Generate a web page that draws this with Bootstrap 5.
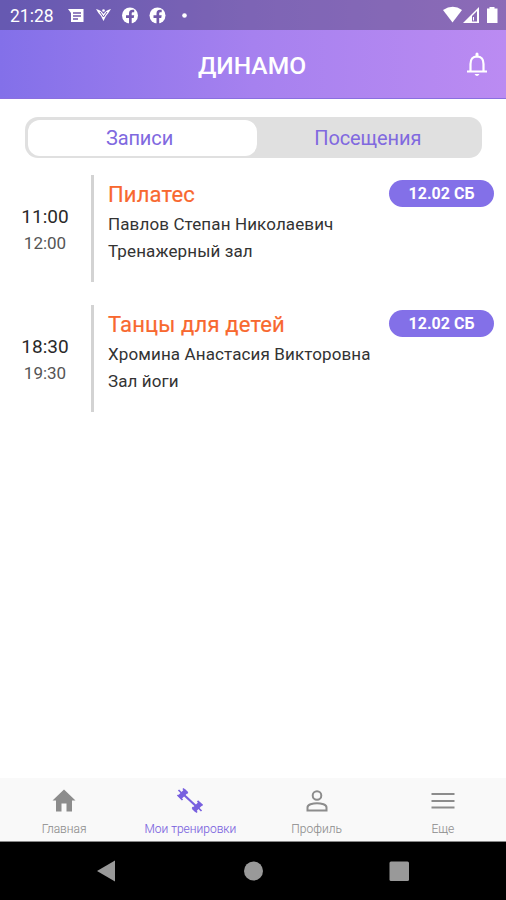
<!DOCTYPE html>
<html lang="ru">
<head>
<meta charset="utf-8">
<meta name="viewport" content="width=device-width, initial-scale=1">
<title>Динамо</title>
<link href="https://cdn.jsdelivr.net/npm/bootstrap@5.3.0/dist/css/bootstrap.min.css" rel="stylesheet">
<style>
body{font-family:Roboto,"Liberation Sans",sans-serif;color:#333;background:#fff;height:900px;overflow:hidden}
svg{display:block;flex:none}
.app-top{background:linear-gradient(90deg,#8370e9,#a681ef 50%,#bb8bf2);height:99px;border-bottom:1px solid #8a6fe0}
.status{height:30px;background:rgba(40,40,60,.32);padding:2px 7px 0 10px}
.clock{font-size:17.5px;line-height:28px;width:57px}
.title-bar{height:68px;padding-right:17px;padding-left:38px;padding-top:2px}
.title-bar h1{font-size:24.6px;font-weight:500;line-height:68px;padding-left:1px;padding-top:1px}
.segments{margin:18px 24px 0 25px;height:41px;background:#e0e0e0;border-radius:13px;padding:2.5px 0 2.5px 2.5px;font-size:20px}
.segments a{color:#8069df;text-decoration:none;width:229px;line-height:36.5px;text-align:center;border-radius:12px;letter-spacing:-.12px}
.segments a.on{background:#fff;width:229px;flex:none;height:36px;padding-right:5px}
.segments .second{flex:1;padding-right:3px}
.sessions{padding-top:17px}
.session{height:107px;margin-bottom:22.5px}
.times{width:91px;padding-top:28px;padding-right:1px;text-align:center}
.from{font-size:19px;line-height:27px;color:#292929}
.to{font-size:17px;line-height:26px;color:#555}
.info{border-left:3px solid #d3d3d3;padding:5px 12px 0 14px}
.info h2{font-size:22px;line-height:29px;font-weight:400;letter-spacing:.16px;color:#f8682f;-webkit-text-stroke:.2px #f8682f}
.info p{font-size:17px;line-height:27.2px;letter-spacing:.12px;white-space:nowrap;transform:translateY(2px)}
.date{width:105px;height:27px;line-height:27px;border-radius:14px;background:#8370e8;color:#fff;font-size:16px;font-weight:700;text-align:center}
.tabs{height:64px;background:#f9f9f9;border-bottom:1px solid #888;padding-left:1px}
.tabs a{color:#909090;text-decoration:none;font-size:12px;font-weight:300;-webkit-text-stroke:.1px;line-height:16px;padding-top:9px}
.tabs a.on{color:#7b64df}
.tabs svg{margin-bottom:7px}
.system{height:58px;background:#000}
.system svg{width:506px;height:58px}
</style>
</head>
<body class="d-flex flex-column">
<header class="app-top text-white">
  <div class="status d-flex align-items-center">
    <span class="clock">21:28</span>
    <svg width="130" height="28" viewBox="67 2 130 28" fill="#fff">
      <path d="M68 9h15.500v13H71V13z"/><path d="M73 13h8M73 16h8M73 19h5" stroke="#7058aa" stroke-width="1.300"/>
      <path d="M96 9q5 1 7.500 5Q106 10 111 9q-3 5-5 7l-2.500 5-2.500-5q-3-3-5-7z"/><path d="M100 12l3.500 5 3.500-5" fill="none" stroke="#7058aa"/><circle cx="103.500" cy="10.500" r="1.300"/>
      <g id="face"><circle cx="130" cy="15.500" r="8"/><path d="M129 24v-6h-3v-2.700h3v-2q0-3.500 3.500-3.500h1.700v2.400h-1.500q-1 0-1 1.200v1.900h2.500l-.5 2.700h-2v6z" fill="#7058aa"/></g>
      <use href="#face" x="27.500"/><circle cx="184.500" cy="15.500" r="2.300"/>
    </svg>
    <svg class="ms-auto" width="58" height="28" viewBox="441 2 58 28" fill="#fff">
      <path d="M443 10q10-6.500 19 0l-9.500 12.500z"/><path fill-rule="evenodd" d="M463 23L479 7v16zM472 16v5.500h5V11z"/><path d="M473.500 17v3.500" stroke="#fff" stroke-width="1"/>
      <path d="M489.500 7h5v1.500h3V23h-10.500V8.500h2.500z"/>
    </svg>
  </div>
  <div class="title-bar d-flex align-items-center">
    <h1 class="m-0 flex-grow-1 text-center">ДИНАМО</h1>
    <svg width="24" height="28" viewBox="0 0 24 28" fill="none" stroke="#fff" stroke-width="2.200"><path d="M5.500 20v-7Q5.500 5.500 12 5.500T18.500 13v7M2 20.500h20"/><path d="M12 3v2" stroke-width="3" stroke-linecap="round"/><path d="M9.500 23h5q-2.500 4-5 0z" fill="#fff" stroke="none"/></svg>
  </div>
</header>
<main class="flex-grow-1">
  <nav class="segments d-flex"><a class="on" href="#">Записи</a><a href="#" class="second">Посещения</a></nav>
  <section class="sessions">
    <article class="session d-flex">
      <div class="times"><div class="from">11:00</div><div class="to">12:00</div></div>
      <div class="info flex-grow-1"><div class="d-flex justify-content-between"><h2 class="m-0">Пилатес</h2><span class="date">12.02 СБ</span></div><p class="m-0">Павлов Степан Николаевич</p><p class="m-0">Тренажерный зал</p></div>
    </article>
    <article class="session d-flex">
      <div class="times"><div class="from">18:30</div><div class="to">19:30</div></div>
      <div class="info flex-grow-1"><div class="d-flex justify-content-between"><h2 class="m-0">Танцы для детей</h2><span class="date">12.02 СБ</span></div><p class="m-0">Хромина Анастасия Викторовна</p><p class="m-0">Зал йоги</p></div>
    </article>
  </section>
</main>
<nav class="tabs row g-0 text-center">
  <a href="#" class="col d-flex flex-column align-items-center"><svg width="26" height="27" viewBox="0 0 26 27" fill="#8c8c8c"><path d="M13 2.500L1.500 13.500H5v11h5.500v-8h5v8H21v-11h3.500z"/></svg>Главная</a>
  <a href="#" class="on col d-flex flex-column align-items-center"><svg width="28" height="27" viewBox="0 0 28 27" fill="none" stroke="#7860df"><path d="M7 7l14 13" stroke-width="2.200"/><path d="M3.500 10.500l7-7M17.500 23.500l7-7" stroke-width="5"/><path d="M1.500 8l5 5M7 1.500l4.500 5M2.500 3l4 4M16.500 20l4.500 5.500M21.500 14l5 4.500M21.500 20l4 4" stroke-width="1.700"/></svg>Мои тренировки</a>
  <a href="#" class="col d-flex flex-column align-items-center"><svg width="26" height="27" viewBox="0 0 26 27" fill="none" stroke="#8c8c8c" stroke-width="2"><circle cx="13" cy="8.500" r="4.300"/><path d="M3.500 23.500v-3q0-2 3-3.200 6.500-2.200 13 0 3 1.200 3 3.200v3z"/></svg>Профиль</a>
  <a href="#" class="col d-flex flex-column align-items-center"><svg width="26" height="27" viewBox="0 0 26 27" stroke="#8c8c8c" stroke-width="2.200"><path d="M1.500 7h23M1.500 14h23M1.500 20.500h23"/></svg>Еще</a>
</nav>
<footer class="system"><svg viewBox="0 842 506 58" fill="#999"><path d="M97 871l18-10.500v21z"/><circle cx="253.500" cy="871" r="9.500"/><rect x="389.500" y="861.500" width="19.500" height="19.500" rx="1.500"/></svg></footer>
<script src="https://cdn.jsdelivr.net/npm/bootstrap@5.3.0/dist/js/bootstrap.bundle.min.js"></script>
</body>
</html>
